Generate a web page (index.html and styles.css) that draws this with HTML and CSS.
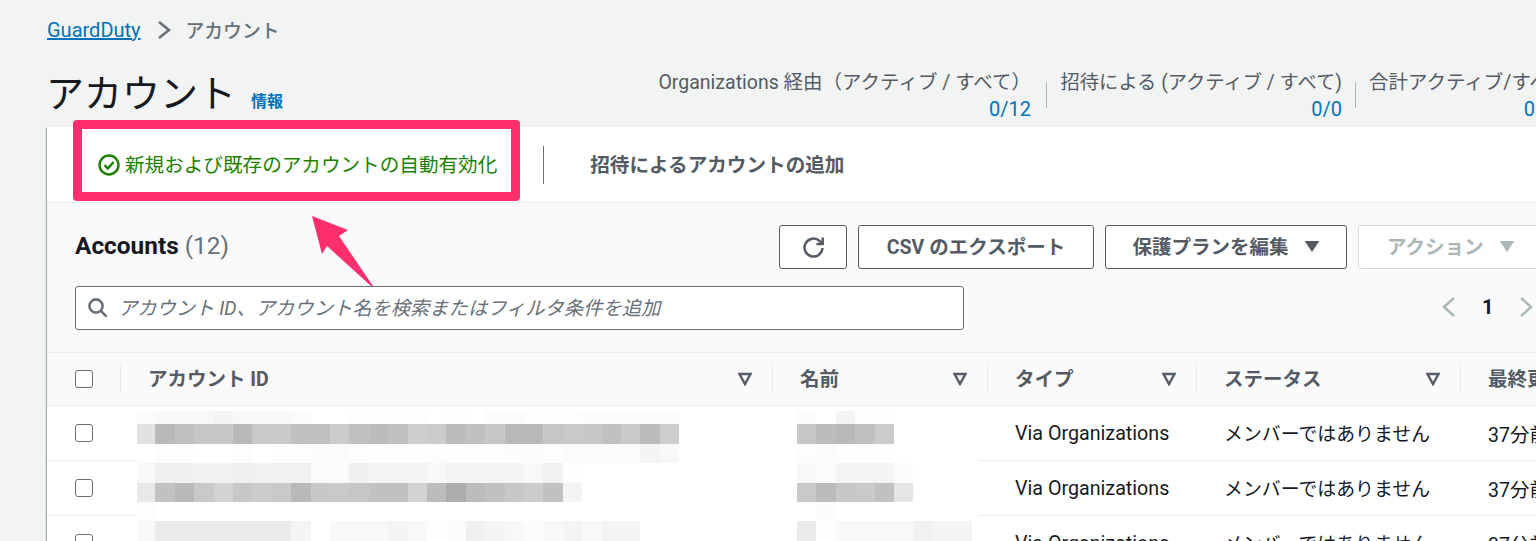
FILE: index.html
```html
<!DOCTYPE html>
<html lang="ja">
<head>
<meta charset="utf-8">
<title>GuardDuty アカウント</title>
<link rel="stylesheet" href="styles.css">
</head>
<body>
<div class="page">
  <nav class="crumbs">
    <a class="link" href="#">GuardDuty</a>
    <svg class="crumb-sep" viewBox="0 0 14 20"><polyline points="2 2 12 10 2 18"/></svg>
    <span class="crumb-cur">アカウント</span>
  </nav>
  <header class="head">
    <div class="title-wrap">
      <h1 class="title">アカウント</h1>
      <a class="info" href="#">情報</a>
    </div>
    <div class="stat stat-a">
      <div class="stat-label">Organizations 経由（アクティブ / すべて）</div>
      <div class="stat-value">0/12</div>
    </div>
    <span class="stat-div"></span>
    <div class="stat stat-b">
      <div class="stat-label">招待による (アクティブ / すべて)</div>
      <div class="stat-value">0/0</div>
    </div>
    <span class="stat-div"></span>
    <div class="stat stat-c">
      <div class="stat-label">合計アクティブ/すべて</div>
      <div class="stat-value">0</div>
    </div>
  </header>

  <section class="card">
    <div class="tabs">
      <div class="tab tab-on">
        <svg class="ico-check" viewBox="0 0 22 22"><circle cx="11" cy="11" r="9.5"/><polyline points="6.5 11.2 9.8 14.4 15.6 8"/></svg>
        <span class="tab-text">新規および既存のアカウントの自動有効化</span>
      </div>
      <span class="tab-div"></span>
      <div class="tab tab-off"><span class="tab-text">招待によるアカウントの追加</span></div>
    </div>

    <div class="tools">
      <div class="tools-top">
        <h2 class="heading">Accounts <span class="count">(12)</span></h2>
        <div class="btns">
          <button class="btn btn-icon"><svg class="ico-refresh" viewBox="0 0 22 22"><path d="M19.6 11.5a8.6 8.6 0 1 1-2.6-6.6l2.6 2.5"/><polyline points="19.8 1.5 19.8 7.6 13.8 7.6"/></svg></button>
          <button class="btn btn-csv"><span class="btn-text">CSV のエクスポート</span></button>
          <button class="btn btn-plan"><span class="btn-text">保護プランを編集</span><svg class="caret" viewBox="0 0 16 12"><polygon points="0 0 16 0 8 12"/></svg></button>
          <button class="btn btn-off"><span class="btn-text">アクション</span><svg class="caret" viewBox="0 0 16 12"><polygon points="0 0 16 0 8 12"/></svg></button>
        </div>
      </div>
      <div class="tools-bottom">
        <div class="filter">
          <svg class="ico-search" viewBox="0 0 20 20"><circle cx="8" cy="8" r="6.6"/><line x1="12.8" y1="12.8" x2="18.6" y2="18.6"/></svg>
          <span class="placeholder">アカウント ID、アカウント名を検索またはフィルタ条件を追加</span>
        </div>
        <div class="pager">
          <svg class="chev" viewBox="0 0 14 22"><polyline points="12 2 2 11 12 20"/></svg>
          <span class="page-num">1</span>
          <svg class="chev" viewBox="0 0 14 22"><polyline points="2 2 12 11 2 20"/></svg>
        </div>
      </div>
    </div>

    <div class="thead grid">
      <div class="cell-check"><span class="checkbox"></span></div>
      <div class="th"><span class="th-text">アカウント ID</span><svg class="funnel" viewBox="0 0 14 14"><polygon points="1.5 2 12.5 2 7 12"/></svg></div>
      <div class="th"><span class="th-text">名前</span><svg class="funnel" viewBox="0 0 14 14"><polygon points="1.5 2 12.5 2 7 12"/></svg></div>
      <div class="th"><span class="th-text">タイプ</span><svg class="funnel" viewBox="0 0 14 14"><polygon points="1.5 2 12.5 2 7 12"/></svg></div>
      <div class="th"><span class="th-text">ステータス</span><svg class="funnel" viewBox="0 0 14 14"><polygon points="1.5 2 12.5 2 7 12"/></svg></div>
      <div class="th"><span class="th-text">最終更新</span></div>
    </div>

    <div class="tbody">
      <div class="tr grid">
        <div class="cell-check"><span class="checkbox"></span></div>
        <div class="td"></div><div class="td"></div>
        <div class="td td-via">Via Organizations</div>
        <div class="td td-kana">メンバーではありません</div>
        <div class="td">37分前</div>
      </div>
      <div class="tr grid">
        <div class="cell-check"><span class="checkbox"></span></div>
        <div class="td"></div><div class="td"></div>
        <div class="td td-via">Via Organizations</div>
        <div class="td td-kana">メンバーではありません</div>
        <div class="td">37分前</div>
      </div>
      <div class="tr grid">
        <div class="cell-check"><span class="checkbox"></span></div>
        <div class="td"></div><div class="td"></div>
        <div class="td td-via">Via Organizations</div>
        <div class="td td-kana">メンバーではありません</div>
        <div class="td">37分前</div>
      </div>

      <div class="mosaic">
        <div class="mrow mrow-0">
          <div class="m-a"><i class="first fb"></i><i class="f8"></i><i class="f8"></i><i class="f8"></i><i class="f4"></i><i class="f8"></i><i class="f8"></i><i class="f8"></i><i class="fb"></i><i></i><i></i><i class="fd"></i><i class="fd"></i><i class="fd"></i><i class="fd"></i><i></i><i class="fd"></i><i></i><i class="fb"></i><i class="fb"></i><i class="fd"></i><i class="fd"></i><i class="fd"></i><i class="fb"></i><i class="fb"></i><i class="fb"></i><i class="fb"></i><i class="fb"></i></div>
          <div class="m-b"><i class="fb"></i><i></i><i class="f4"></i><i class="fd"></i><i class="fd"></i></div>
        </div>
        <div class="mrow">
          <div class="m-a"><i class="first e2"></i><i class="b8"></i><i class="c0"></i><i class="c6"></i><i class="c6"></i><i class="b8"></i><i class="c8"></i><i class="c8"></i><i class="c0"></i><i class="c0"></i><i class="cb"></i><i class="c0"></i><i class="bc"></i><i class="c0"></i><i class="cd"></i><i class="cb"></i><i class="bc"></i><i class="c0"></i><i class="c6"></i><i class="b8"></i><i class="b8"></i><i class="c6"></i><i class="c8"></i><i class="c6"></i><i class="c0"></i><i class="c8"></i><i class="bc"></i><i class="cd"></i></div>
          <div class="m-b"><i class="c6"></i><i class="bc"></i><i class="b8"></i><i class="c0"></i><i class="cb"></i></div>
        </div>
        <div class="mrow">
          <div class="m-a"><i class="first"></i><i class="fd"></i><i class="fd"></i><i></i><i></i><i class="fd"></i><i></i><i class="fd"></i><i class="fd"></i><i class="fb"></i><i class="fb"></i><i class="fd"></i><i class="fd"></i><i class="fd"></i><i class="fd"></i><i class="fd"></i><i class="fd"></i><i class="fd"></i><i class="fd"></i><i class="fb"></i><i class="fb"></i><i class="fd"></i><i class="fb"></i><i class="fb"></i><i class="fb"></i><i class="fb"></i><i class="f4"></i><i class="f8"></i></div>
          <div class="m-b"><i class="fd"></i><i class="fb"></i><i class="fd"></i><i class="fd"></i><i class="fd"></i></div>
        </div>
        <div class="mrow">
          <div class="m-a"><i class="first f8"></i><i class="ef"></i><i class="ef"></i><i class="f0"></i><i class="f0"></i><i class="ef"></i><i class="f0"></i><i class="f0"></i><i class="f0"></i><i class="fb"></i><i class="fb"></i><i class="ef"></i><i class="f4"></i><i class="f4"></i><i class="f4"></i><i class="f8"></i><i class="f4"></i><i class="f4"></i><i class="f4"></i><i class="f4"></i><i class="f8"></i><i class="f0"></i><i class="fd"></i></div>
          <div class="m-b"><i class="f8"></i><i class="fb"></i><i class="f4"></i><i class="f4"></i><i class="f4"></i><i class="fb"></i></div>
        </div>
        <div class="mrow">
          <div class="m-a"><i class="first e8"></i><i class="c0"></i><i class="b8"></i><i class="c8"></i><i class="d2"></i><i class="c6"></i><i class="cb"></i><i class="c8"></i><i class="b8"></i><i class="c6"></i><i class="c8"></i><i class="c6"></i><i class="c0"></i><i class="c0"></i><i class="d2"></i><i class="bc"></i><i class="ad"></i><i class="bc"></i><i class="c0"></i><i class="c6"></i><i class="cb"></i><i class="c0"></i><i class="f4"></i></div>
          <div class="m-b"><i class="c8"></i><i class="bc"></i><i class="c6"></i><i class="c8"></i><i class="c0"></i><i class="e5"></i></div>
        </div>
        <div class="mrow">
          <div class="m-a"><i class="first fd"></i></div>
          <div class="m-b"><i></i><i class="fb"></i></div>
        </div>
        <div class="mrow">
          <div class="m-a"><i class="first f8"></i><i class="eb"></i><i class="eb"></i><i class="eb"></i><i class="eb"></i><i class="eb"></i><i class="eb"></i><i class="eb"></i><i class="f4"></i><i></i><i class="f8"></i><i class="f8"></i><i class="f8"></i><i class="f4"></i><i class="f8"></i><i class="fd"></i><i class="fb"></i><i class="ef"></i><i class="f4"></i><i class="f8"></i><i class="fb"></i><i class="f8"></i><i class="f4"></i><i class="f8"></i><i class="f4"></i><i class="f4"></i></div>
          <div class="m-b"><i class="eb"></i><i class="fd"></i><i class="f8"></i><i class="f8"></i><i class="f8"></i><i class="f8"></i><i class="f0"></i><i class="f4"></i><i class="f4"></i></div>
        </div>
      </div>
    </div>
  </section>

  <div class="callout"></div>
  <svg class="arrow" viewBox="0 0 70 80"><polygon points="2 1 38 15 29 21 63 71 61 71 17 31 12 39"/></svg>
</div>
</body>
</html>
```

FILE: styles.css
```css
* { box-sizing: border-box; }
html, body { margin: 0; height: 541px; overflow: hidden; background: #f2f3f3; }
body { font-family: Roboto, "Noto Sans CJK JP", sans-serif; font-size: 19.5px; color: #16191f; }
.page { position: relative; width: 1760px; padding: 17px 0 0 47px; }
h1, h2 { margin: 0; font-weight: 400; }

.link { color: #0073bb; font-size: 20px; }
.crumbs { display: flex; align-items: center; height: 26px; }
.crumb-sep { width: 14px; height: 20px; margin: 0 15px 0 16px; fill: none; stroke: #687078; stroke-width: 2.6; }
.crumb-cur { color: #687078; font-size: 18.8px; font-weight: 500; padding-bottom: 2px; }

.head { display: flex; height: 84px; }
.title-wrap { display: flex; align-items: baseline; width: 611px; padding-top: 27px; }
.title { margin-left: -1px; font-size: 38px; line-height: 48px; }
.info { margin-left: 15px; font-size: 16px; font-weight: 700; color: #0073bb; text-decoration: none; }
.stat { padding-top: 27px; text-align: right; white-space: nowrap; color: #545b64; }
.stat-label { line-height: 26px; font-size: 19.5px; }
.stat-b .stat-label { font-size: 19.3px; }
.stat-value { line-height: 26px; color: #0073bb; font-size: 20px; }
.stat-a { width: 373px; }
.stat-b { width: 282px; }
.stat-c { width: 166px; text-align: left; }
.stat-c .stat-value { text-align: right; }
.stat-div { flex: none; width: 1px; height: 26px; margin: 39px 13px 0 15px; background: #aab7b8; }
.stat-b + .stat-div { margin-left: 13px; }

.card { width: 1700px; background: #fff; box-shadow: 0 1px 1px rgba(0,28,36,.3), -1px 1px 1px rgba(0,28,36,.3); }

.tabs { display: flex; align-items: center; height: 76px; padding-left: 51px; border-bottom: 1px solid #eaeded; }
.tab { display: flex; align-items: center; white-space: nowrap; font-size: 19.6px; }
.tab-text { padding-bottom: 3px; }
.tab-on { color: #1d8102; gap: 5px; }
.tab-off { color: #545b64; font-weight: 700; }
.tab-div { width: 1px; height: 38px; margin: 0 46px 0 46px; background: #687078; }
.ico-check { width: 22px; height: 22px; fill: none; stroke: #1d8102; stroke-width: 2.4; }

.tools { height: 149px; padding: 22px 28px 0; background: #fafafa; }
.tools-top { display: flex; align-items: center; height: 44px; }
.heading { width: 704px; padding-bottom: 3px; font-size: 24.4px; font-weight: 700; }
.count { font-weight: 400; color: #687078; }
.btns { display: flex; gap: 11px; }
.btn { display: flex; align-items: center; justify-content: center; height: 44px; background: #fff; border: 1.4px solid #545b64; border-radius: 3px; font: 700 19.5px Roboto, "Noto Sans CJK JP", sans-serif; color: #545b64; padding: 0; white-space: nowrap; }
.btn-text { padding-bottom: 3px; }
.btn-icon { width: 68px; }
.btn-csv { width: 236px; }
.btn-plan { width: 242px; gap: 15px; }
.btn-off { width: 190px; gap: 15px; justify-content: flex-start; padding-left: 28px; border-color: #d5dbdb; color: #aab7b8; }
.caret { width: 16px; height: 11px; margin-bottom: 1px; fill: currentColor; }
.ico-refresh { width: 23px; height: 23px; fill: none; stroke: #545b64; stroke-width: 2.4; }

.tools-bottom { display: flex; align-items: center; margin-top: 17px; }
.filter { display: flex; align-items: center; gap: 10px; width: 889px; height: 44px; padding-left: 12px; background: #fff; border: 1.4px solid #687078; border-radius: 3px; }
.ico-search { width: 20px; height: 20px; fill: none; stroke: #687078; stroke-width: 2.6; }
.placeholder { padding-bottom: 2px; font-style: italic; color: #687078; white-space: nowrap; font-size: 19.3px; }
.pager { display: flex; align-items: center; margin-left: 478px; gap: 26px; padding-bottom: 2px; }
.chev { width: 14px; height: 22px; fill: none; stroke: #aab7b8; stroke-width: 2.4; }
.page-num { font-weight: 700; font-size: 20px; }

.grid { display: grid; grid-template-columns: 73px 652px 215px 209px 264px 300px; }
.thead { height: 54px; background: #fafafa; border-top: 1px solid #eaeded; border-bottom: 1px solid #eaeded; align-items: center; }
.cell-check { display: flex; padding-left: 28px; }
.checkbox { width: 18px; height: 18px; background: #fff; border: 1.4px solid #687078; border-radius: 3px; }
.th { display: flex; align-items: center; justify-content: space-between; height: 28px; padding: 0 20px 0 27px; border-left: 1px solid #eaeded; color: #545b64; font-weight: 700; white-space: nowrap; }
.th-text { padding-bottom: 3px; }
.funnel { width: 14px; height: 14px; margin-bottom: 1px; fill: none; stroke: #545b64; stroke-width: 2.4; }

.tbody { position: relative; background: #fff; }
.tr { height: 55px; align-items: center; border-bottom: 1px solid #eaeded; }
.td { padding-left: 28px; white-space: nowrap; }
.td-via { font-size: 19.7px; padding-top: 1px; }
.td-kana { font-size: 18.9px; padding-bottom: 1px; }

.mosaic { position: absolute; top: 0; left: 90px; width: 842px; height: 135px; padding-top: 5px; background: #fff; }
.mrow { display: flex; height: 19.4px; }
.mrow-0 { height: 13.4px; }
.m-a { display: flex; width: 660px; }
.m-b { display: flex; }
.mrow i { flex: none; width: 19.42px; height: 100%; }
.mrow i.first { width: 18.3px; }
.ad { background: #adadae; } .b8 { background: #b9b9ba; } .bc { background: #bcbcbd; } .c0 { background: #c0c1c2; }
.c6 { background: #c6c7c8; } .c8 { background: #c9c9ca; } .cb { background: #cbcccd; } .cd { background: #cdcecf; }
.d2 { background: #d2d4d3; } .e2 { background: #e2e2e2; } .e5 { background: #e5e5e5; } .e8 { background: #e8e8e8; }
.eb { background: #ebebeb; } .ef { background: #eff0f0; } .f0 { background: #f1f1f1; } .f4 { background: #f4f4f4; }
.f8 { background: #f8f8f8; } .fb { background: #fbfbfb; } .fd { background: #fdfdfd; }

.callout { position: absolute; left: 72.5px; top: 120px; width: 447.5px; height: 81px; border: 9px solid #ff2f6d; border-radius: 4px; }
.arrow { position: absolute; left: 310px; top: 215px; width: 70px; height: 80px; fill: #ff2f6d; }
```
